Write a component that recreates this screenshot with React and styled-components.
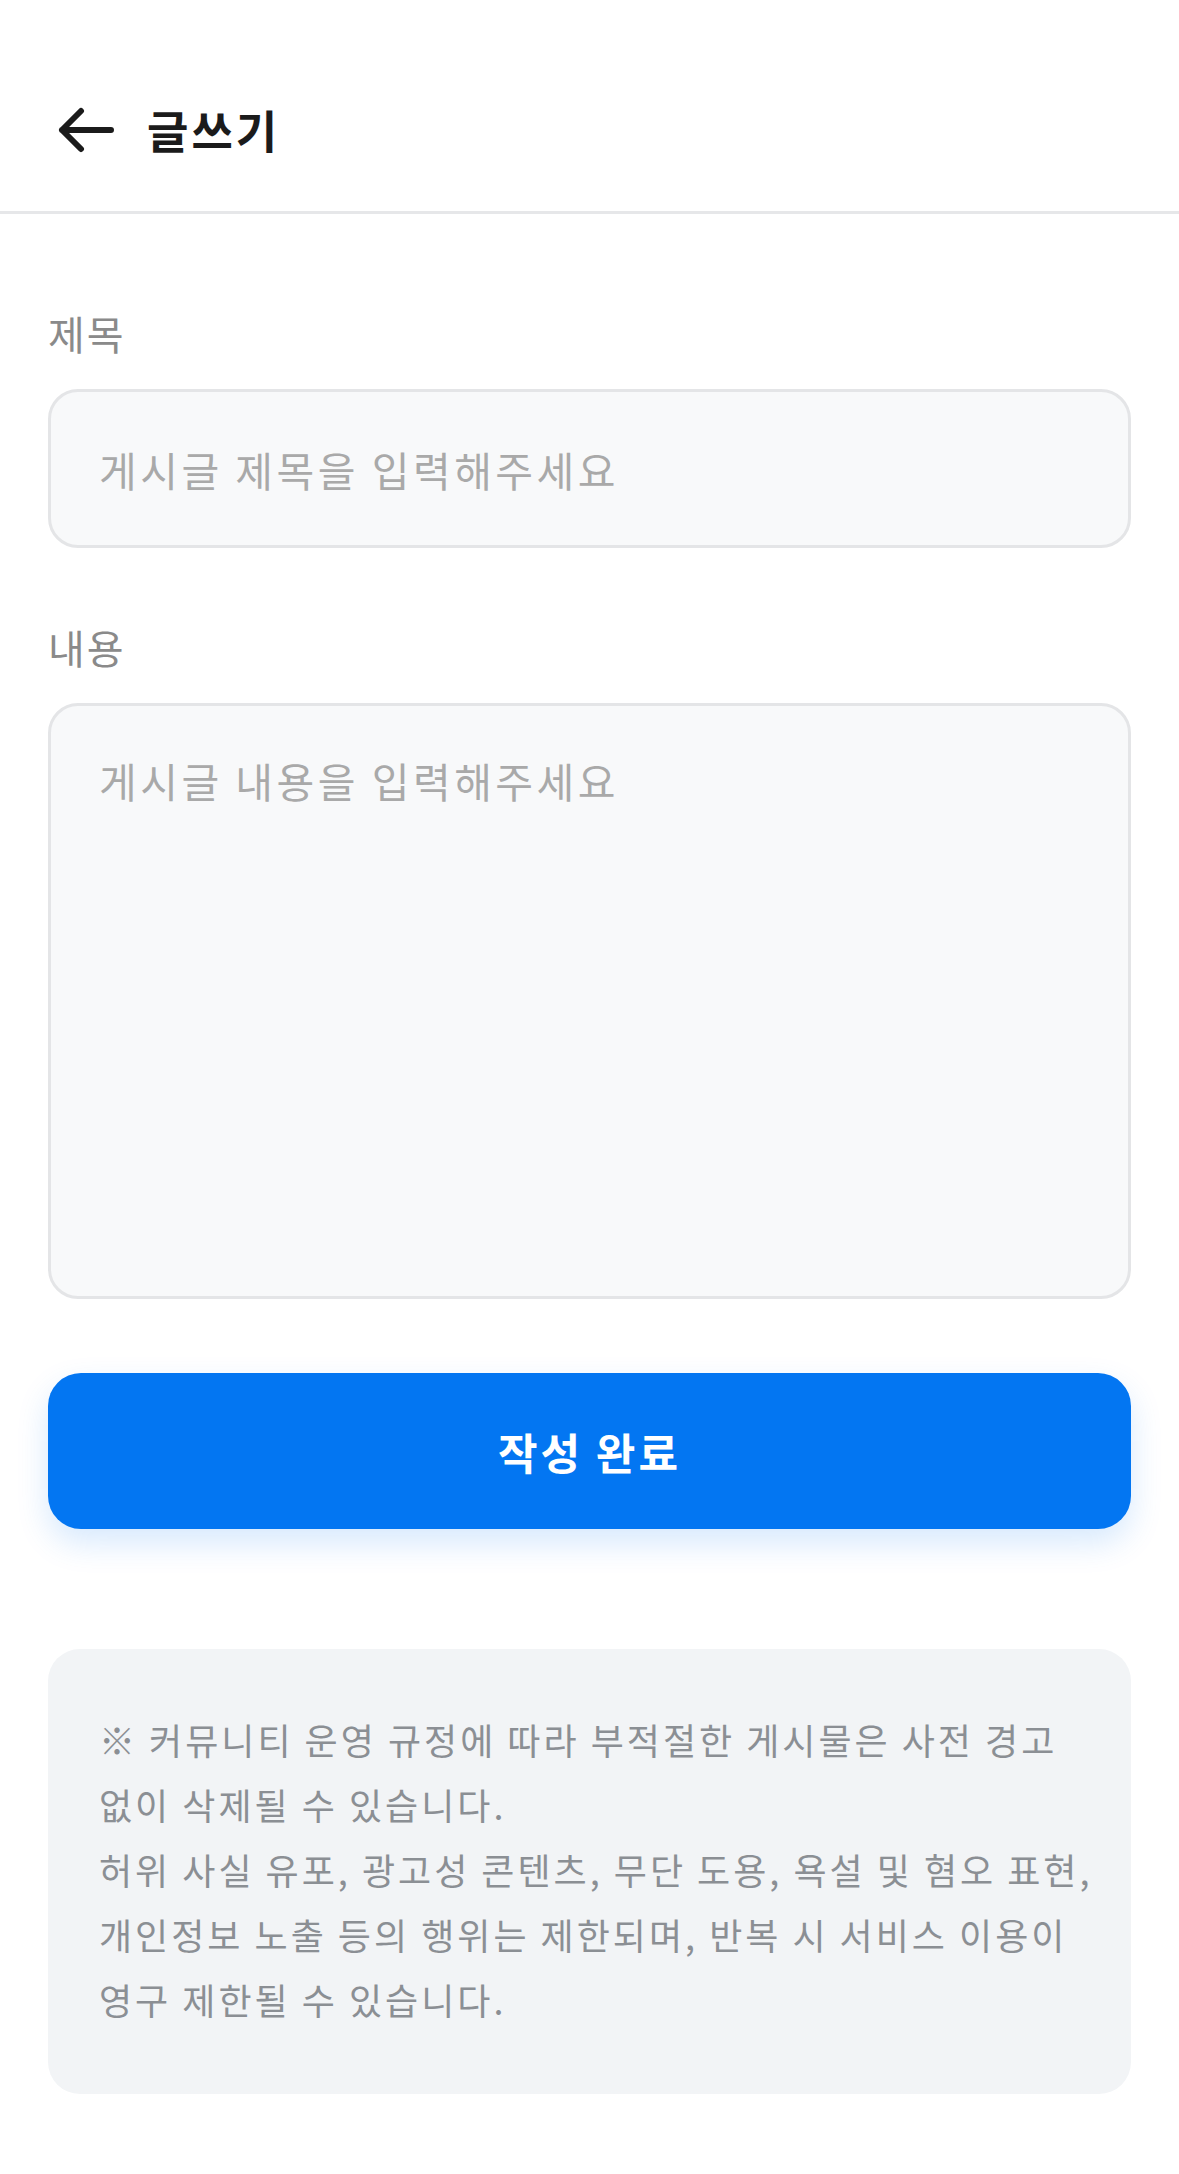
import React, { useState } from 'react';
import styled, { createGlobalStyle } from 'styled-components';

const GlobalStyle = createGlobalStyle`
  * {
    box-sizing: border-box;
  }

  body {
    margin: 0;
    background: #ffffff;
    font-family: "Noto Sans CJK KR", "Noto Sans", sans-serif;
  }
`;

const Page = styled.div`
  display: flex;
  flex-direction: column;
  min-height: 2174px;
  background: #ffffff;
`;

const Header = styled.header`
  display: flex;
  align-items: center;
  gap: 33px;
  height: 214px;
  padding: 48px 58px 0;
  border-bottom: 3px solid #e6e7e9;
`;

const BackButton = styled.button`
  display: flex;
  align-items: center;
  justify-content: center;
  padding: 0;
  border: none;
  background: none;
  cursor: pointer;
`;

const Title = styled.h1`
  margin: 0;
  font-size: 45px;
  font-weight: 700;
  line-height: 1.2;
  letter-spacing: 3px;
  color: #1b1b1b;
`;

const Form = styled.form`
  display: flex;
  flex-direction: column;
  padding: 95px 48px 0;
`;

const Field = styled.div`
  display: flex;
  flex-direction: column;
  gap: 32px;
  margin-bottom: ${props => props.spacing}px;
`;

const Label = styled.label`
  font-size: 40px;
  font-weight: 400;
  line-height: 1.2;
  letter-spacing: 2px;
  color: #8a8a8a;
`;

const fieldBase = `
  width: 100%;
  border: 3px solid #e4e5e7;
  border-radius: 30px;
  background: #f8f9fa;
  font-family: inherit;
  font-size: 41px;
  letter-spacing: 3.5px;
  color: #222;
  outline: none;

  &::placeholder {
    color: #a9a9a9;
  }
`;

const TitleInput = styled.input`
  ${fieldBase}
  height: 159px;
  padding: 0 48px;
`;

const ContentArea = styled.textarea`
  ${fieldBase}
  height: 596px;
  padding: 44px 48px;
  line-height: 1.5;
  resize: none;
`;

const SubmitButton = styled.button`
  height: 156px;
  border: none;
  border-radius: 33px;
  background: #0376f2;
  color: #ffffff;
  font-family: inherit;
  font-size: 43px;
  font-weight: 700;
  letter-spacing: 3px;
  box-shadow: 0 14px 32px rgba(3, 118, 242, 0.16);
  cursor: pointer;
`;

const Notice = styled.div`
  margin-top: 120px;
  padding: 58px 48px 62px 51px;
  border-radius: 32px;
  background: #f2f4f6;
  color: #8b8f94;
  font-size: 36px;
  line-height: 65px;
  letter-spacing: 3px;
`;

const NoticeLine = styled.span`
  display: block;
  white-space: nowrap;
`;

const ArrowLeft = () => (
  <svg width="56" height="46" viewBox="0 0 56 46" fill="none">
    <path
      d="M53 23H4M23 4L4 23L23 42"
      stroke="#1b1b1b"
      strokeWidth="6"
      strokeLinecap="round"
      strokeLinejoin="round"
    />
  </svg>
);

const noticeLines = [
  '※ 커뮤니티 운영 규정에 따라 부적절한 게시물은 사전 경고',
  '없이 삭제될 수 있습니다.',
  '허위 사실 유포, 광고성 콘텐츠, 무단 도용, 욕설 및 혐오 표현,',
  '개인정보 노출 등의 행위는 제한되며, 반복 시 서비스 이용이',
  '영구 제한될 수 있습니다.',
];

const App = () => {
  const [title, setTitle] = useState('');
  const [content, setContent] = useState('');

  return (
    <Page>
      <GlobalStyle />
      <Header>
        <BackButton type="button" aria-label="뒤로가기">
          <ArrowLeft />
        </BackButton>
        <Title>글쓰기</Title>
      </Header>

      <Form onSubmit={(e) => e.preventDefault()}>
        <Field spacing={75}>
          <Label htmlFor="post-title">제목</Label>
          <TitleInput
            id="post-title"
            type="text"
            placeholder="게시글 제목을 입력해주세요"
            value={title}
            onChange={(e) => setTitle(e.target.value)}
          />
        </Field>

        <Field spacing={74}>
          <Label htmlFor="post-content">내용</Label>
          <ContentArea
            id="post-content"
            placeholder="게시글 내용을 입력해주세요"
            value={content}
            onChange={(e) => setContent(e.target.value)}
          />
        </Field>

        <SubmitButton type="submit">작성 완료</SubmitButton>

        <Notice>
          {noticeLines.map((line) => (
            <NoticeLine key={line}>{line}</NoticeLine>
          ))}
        </Notice>
      </Form>
    </Page>
  );
};

export default App;
